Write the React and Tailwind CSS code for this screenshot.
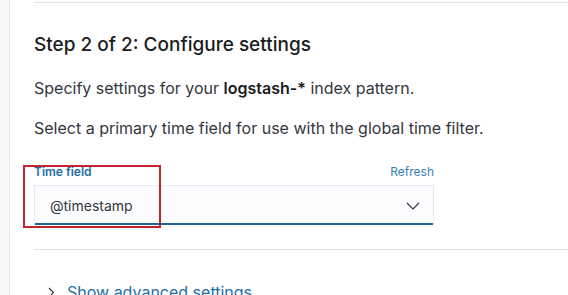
export default function App() {
  return (
    <div className="flex h-[295px] w-[568px] overflow-hidden bg-white font-['Inter',sans-serif]">
      <div className="w-[10px] shrink-0 border-r border-[#e4e8ee] bg-[#f7f8fa]" />
      <div className="flex-1 pl-[24px]">
        <div className="mt-[2px] h-px bg-[#dfe3e9]" />
        <h2 className="mt-[30px] text-[19px] leading-[24px] font-medium text-[#1a1c21]">
          Step 2 of 2: Configure settings
        </h2>
        <p className="mt-[19px] text-[16px] leading-[24px] text-[#343741]">
          Specify settings for your <b className="font-semibold text-[#1a1c21]">logstash-*</b> index pattern.
        </p>
        <p className="mt-[16px] text-[16px] leading-[24px] text-[#343741]">
          Select a primary time field for use with the global time filter.
        </p>
        <div className="relative mt-[24px] w-[400px]">
          <div className="pointer-events-none absolute left-[-11px] top-[1px] h-[63px] w-[138px] border-2 border-[#c22530]" />
          <div className="flex items-center justify-between">
            <span className="text-[12px] leading-[16px] font-semibold text-[#1f6ea6]">Time field</span>
            <span className="text-[12px] leading-[16px] text-[#3a7fb0]">Refresh</span>
          </div>
          <div className="mt-[5px] flex h-[40px] items-center justify-between border border-b-0 border-[#e6e9ee] bg-[#fbfcfd] pl-[15px] pr-[13px] shadow-[inset_0_-2px_0_#1d6690]">
            <span className="text-[14px] text-[#343741]">@timestamp</span>
            <svg width="14" height="8" viewBox="0 0 14 8" fill="none" stroke="#343741" strokeWidth="1.2">
              <path d="M1 1l6 6 6-6" />
            </svg>
          </div>
        </div>
        <div className="mt-[24px] h-px bg-[#dfe3e9]" />
        <div className="mt-[30px] flex items-center gap-[13px] pl-[14px] text-[#1f6ea6]">
          <svg width="6" height="11" viewBox="0 0 6 11" fill="none" stroke="#343741" strokeWidth="1.2">
            <path d="M1 1l4.5 4.5L1 10" />
          </svg>
          <span className="text-[16px] leading-[24px]">Show advanced settings</span>
        </div>
      </div>
    </div>
  );
}
